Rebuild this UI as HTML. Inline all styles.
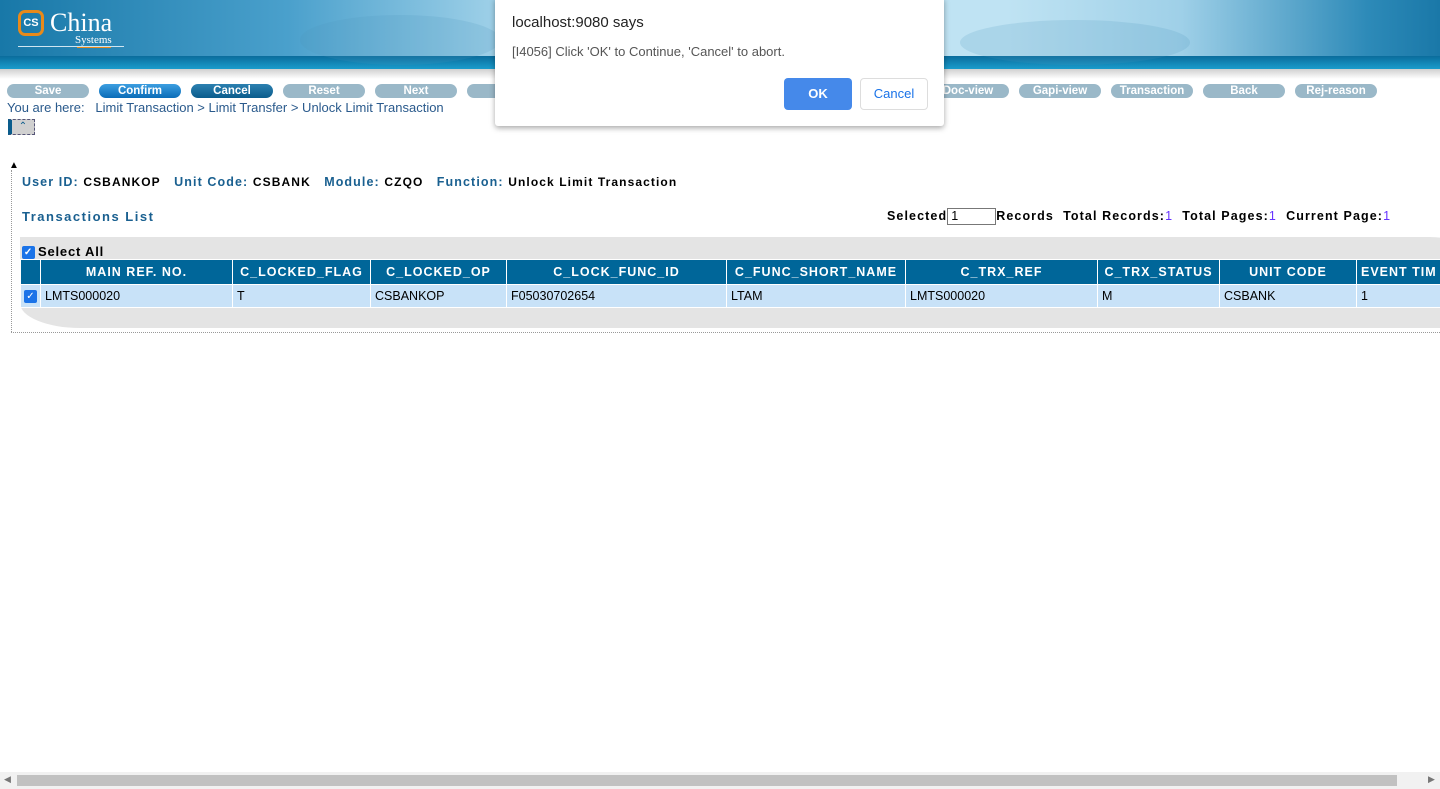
<!DOCTYPE html>
<html><head><meta charset="utf-8"><style>
*{box-sizing:border-box}
body{margin:0;width:1440px;height:789px;overflow:hidden;background:#fff;font-family:"Liberation Sans",Arial,sans-serif;position:relative}
.hdr{position:absolute;left:0;top:0;width:1440px;height:56px;background:linear-gradient(90deg,#1878a8 0%,#4aa0cc 20%,#bfe3f3 40%,#bfe3f3 70%,#9fd0e8 82%,#2d8ab8 95%,#1a78a8 100%)}
.band{position:absolute;left:0;top:56px;width:1440px;height:13px;background:linear-gradient(#0a6c9c,#1a9ccc)}
.shadow{position:absolute;left:0;top:69px;width:1440px;height:10px;background:linear-gradient(#d0d0d0,#fff)}
.btn{position:absolute;top:84px;width:82px;height:14px;border-radius:7px;background:#9ab8c8;color:#fff;font-weight:bold;font-size:11.5px;text-align:center;line-height:14px}
.btn.a{background:linear-gradient(#3c9ee0,#0a6cb8)}
.btn.b{background:linear-gradient(#2c80b0,#0a5c8c)}
.bc{position:absolute;left:7px;top:100px;font-size:13px;color:#2a5a8c}
.lbl{color:#1a6090;letter-spacing:1.1px;font-weight:bold;font-size:12.5px}
.val{color:#000;letter-spacing:1.1px;font-weight:bold;font-size:12px}
table{border-collapse:collapse;table-layout:fixed;width:1456px;position:absolute;left:20px;top:259px;font-size:12.5px}
th{background:#006699;color:#fff;height:25px;border:1px solid #fff;font-weight:bold;letter-spacing:1px;padding:0 4px;white-space:nowrap;overflow:hidden}
td{background:#c8e2f8;height:23px;border:1px solid #fff;padding:0 4px;white-space:nowrap;overflow:hidden}
.cb{display:inline-block;width:13px;height:13px;background:#1a73e8;border-radius:2px;color:#fff;font-size:10px;line-height:13px;text-align:center;vertical-align:middle}
</style></head><body>
<div class="hdr"></div><div class="band"></div><div class="shadow"></div>
<div style="position:absolute;left:300px;top:15px;width:200px;height:50px;border-radius:50%;background:rgba(80,150,190,.18)"></div>
<div style="position:absolute;left:960px;top:20px;width:230px;height:45px;border-radius:50%;background:rgba(80,150,190,.18)"></div>
<div style="position:absolute;left:18px;top:10px;width:26px;height:26px;border:3px solid #e88a1a;border-radius:7px;color:#fff;font-weight:bold;font-size:11px;text-align:center;line-height:20px">CS</div>
<div style="position:absolute;left:50px;top:8px;color:#fff;font-family:'Liberation Serif',serif;font-size:26px">China</div>
<div style="position:absolute;left:75px;top:34px;color:#fff;font-family:'Liberation Serif',serif;font-size:11px">Systems</div>
<div style="position:absolute;left:18px;top:46px;width:106px;height:1px;background:#cfe6f2"></div>
<div style="position:absolute;left:77px;top:47px;width:34px;height:1px;background:#e88a1a"></div>
<div class="btn" style="left:7px">Save</div>
<div class="btn a" style="left:99px">Confirm</div>
<div class="btn b" style="left:191px">Cancel</div>
<div class="btn" style="left:283px">Reset</div>
<div class="btn" style="left:375px">Next</div>
<div class="btn" style="left:467px">L</div>
<div class="btn" style="left:927px">Doc-view</div>
<div class="btn" style="left:1019px">Gapi-view</div>
<div class="btn" style="left:1111px">Transaction</div>
<div class="btn" style="left:1203px">Back</div>
<div class="btn" style="left:1295px">Rej-reason</div>
<div class="bc">You are here: &nbsp;&nbsp;Limit Transaction &gt; Limit Transfer &gt; Unlock Limit Transaction</div>
<div style="position:absolute;left:8px;top:119px;width:27px;height:16px;border:1px dashed #557;background:#d0d0d0;border-left:4px solid #0a5c8c;font-size:10px;color:#0a5c8c;text-align:center;line-height:14px">&#8963;</div>
<div style="position:absolute;left:9px;top:160px;font-size:10px">&#9650;</div>
<div style="position:absolute;left:11px;top:170px;height:162px;border-left:1px dotted #999"></div>
<div style="position:absolute;left:11px;top:332px;width:1429px;border-top:1px dotted #999"></div>
<div style="position:absolute;left:22px;top:173px"><span class="lbl">User ID: </span><span class="val">CSBANKOP</span>&nbsp;&nbsp; <span class="lbl">Unit Code: </span><span class="val">CSBANK</span>&nbsp;&nbsp; <span class="lbl">Module: </span><span class="val">CZQO</span>&nbsp;&nbsp; <span class="lbl">Function: </span><span class="val">Unlock Limit Transaction</span></div>
<div style="position:absolute;left:22px;top:209px;font-weight:bold;color:#1a6090;font-size:13px;letter-spacing:1.5px">Transactions List</div>
<div style="position:absolute;left:887px;top:208px;font-size:12.5px;font-weight:bold;letter-spacing:1.1px;white-space:nowrap">Selected<span style="display:inline-block;width:49px;height:17px;border:1px solid #777;font-weight:normal;vertical-align:middle;padding-left:3px;line-height:15px;letter-spacing:0">1</span>Records&nbsp; Total Records:<span style="color:#63f;font-weight:normal">1</span>&nbsp; Total Pages:<span style="color:#63f;font-weight:normal">1</span>&nbsp; Current Page:<span style="color:#63f;font-weight:normal">1</span></div>
<div style="position:absolute;left:20px;top:237px;width:1440px;height:91px;background:#e4e4e4;border-radius:0 30px 0 60px/0 10px 0 25px"></div>
<div style="position:absolute;left:22px;top:244px;font-weight:bold;font-size:13px;letter-spacing:.8px"><span class="cb" style="margin-right:3px">✓</span>Select All</div>
<table><colgroup><col style="width:20px"><col style="width:192px"><col style="width:138px"><col style="width:136px"><col style="width:220px"><col style="width:179px"><col style="width:192px"><col style="width:122px"><col style="width:137px"><col style="width:120px"></colgroup>
<tr><th></th><th>MAIN REF. NO.</th><th>C_LOCKED_FLAG</th><th>C_LOCKED_OP</th><th>C_LOCK_FUNC_ID</th><th>C_FUNC_SHORT_NAME</th><th>C_TRX_REF</th><th>C_TRX_STATUS</th><th>UNIT CODE</th><th style="text-align:left">EVENT TIM</th></tr>
<tr><td style="padding:0 3px"><span class="cb">✓</span></td><td>LMTS000020</td><td>T</td><td>CSBANKOP</td><td>F05030702654</td><td>LTAM</td><td>LMTS000020</td><td>M</td><td>CSBANK</td><td>1</td></tr></table>
<div style="position:absolute;left:495px;top:-2px;width:449px;height:128px;background:#fff;border-radius:0 0 3px 3px;box-shadow:0 2px 6px rgba(0,0,0,.35)">
<div style="position:absolute;left:17px;top:16px;font-size:15px;color:#222">localhost:9080 says</div>
<div style="position:absolute;left:17px;top:46px;font-size:13px;color:#555">[I4056] Click 'OK' to Continue, 'Cancel' to abort.</div>
<div style="position:absolute;left:289px;top:80px;width:68px;height:32px;background:#4589ea;border-radius:4px;color:#fff;font-weight:bold;font-size:13px;text-align:center;line-height:32px">OK</div>
<div style="position:absolute;left:365px;top:80px;width:68px;height:32px;border:1px solid #ddd;border-radius:4px;color:#1a73e8;font-size:13px;text-align:center;line-height:30px">Cancel</div>
</div>
<div style="position:absolute;left:0;top:772px;width:1440px;height:17px;background:#f1f1f1"></div>
<div style="position:absolute;left:17px;top:775px;width:1380px;height:11px;background:#c1c1c1"></div>
<div style="position:absolute;left:4px;top:774px;font-size:9px;color:#777">&#9664;</div>
<div style="position:absolute;left:1428px;top:774px;font-size:9px;color:#777">&#9654;</div>
</body></html>
